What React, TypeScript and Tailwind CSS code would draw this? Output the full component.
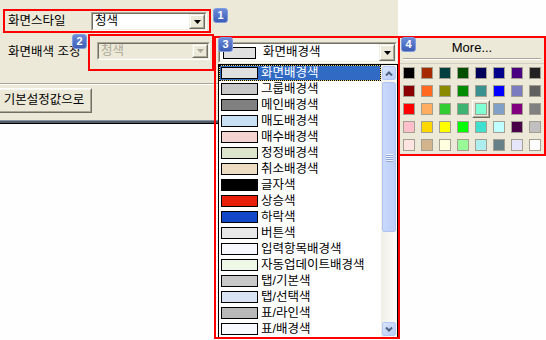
import type { ReactNode } from "react";

const listItems = [
  { name: "화면배경색", color: "#e0e0e0" },
  { name: "그룹배경색", color: "#c8c8c8" },
  { name: "메인배경색", color: "#808080" },
  { name: "매도배경색", color: "#c9dff3" },
  { name: "매수배경색", color: "#f3d3d0" },
  { name: "정정배경색", color: "#dce4cb" },
  { name: "취소배경색", color: "#eddcc2" },
  { name: "글자색", color: "#000000" },
  { name: "상승색", color: "#e8200a" },
  { name: "하락색", color: "#1247c8" },
  { name: "버튼색", color: "#e8e8e8" },
  { name: "입력항목배경색", color: "#f8f8ff" },
  { name: "자동업데이트배경색", color: "#eef8e6" },
  { name: "탭/기본색", color: "#c8c8c8" },
  { name: "탭/선택색", color: "#d8e4f4" },
  { name: "표/라인색", color: "#b8b8b8" },
  { name: "표/배경색", color: "#f8faff" },
];

const palette = [
  ["#000000", "#a52a00", "#004040", "#005000", "#00005a", "#00008b", "#4b0082", "#222222"],
  ["#8b0000", "#ff6a20", "#8b8b00", "#008b00", "#3a8f8f", "#0000ff", "#7b7bc0", "#606060"],
  ["#ff0000", "#ffad60", "#32cd32", "#3cb371", "#80ffd4", "#80a0c8", "#800080", "#808080"],
  ["#ffc0cb", "#ffd700", "#ffff00", "#00ff00", "#40e0d0", "#c0ffff", "#480048", "#c0c0c0"],
  ["#ffe4e1", "#d2b48c", "#ffffe0", "#98fb98", "#afeeee", "#668088", "#e6e6fa", "#ffffff"],
];

function DropButton({ disabled }: { disabled?: boolean }) {
  return (
    <div className="w-[16px] self-stretch border border-t-[#f1efe2] border-l-[#f1efe2] border-b-[#716f64] border-r-[#716f64]">
      <div className="h-full flex items-center justify-center bg-[#ece9d8] border border-t-white border-l-white border-b-[#aca899] border-r-[#aca899]">
        <svg width="7" height="4" viewBox="0 0 7 4">
          <polygon points="0,0 7,0 3.5,4" fill={disabled ? "#aca899" : "#000"} />
        </svg>
      </div>
    </div>
  );
}

function Combo({
  className,
  disabled,
  children,
}: {
  className: string;
  disabled?: boolean;
  children: ReactNode;
}) {
  return (
    <div
      className={`flex border border-t-[#aca899] border-l-[#aca899] border-b-white border-r-white ${className}`}
    >
      <div
        className={`flex flex-1 min-w-0 border border-t-[#716f64] border-l-[#716f64] border-b-[#f1efe2] border-r-[#f1efe2] ${
          disabled ? "bg-[#ece9d8]" : "bg-white"
        }`}
      >
        <div className="flex flex-1 min-w-0 items-center">{children}</div>
        <DropButton disabled={disabled} />
      </div>
    </div>
  );
}

function Swatch({ color, w }: { color: string; w: string }) {
  return <div className={`${w} h-[12px] shrink-0 border border-black`} style={{ background: color }} />;
}

function SettingsPanel() {
  return (
    <div className="w-[398px]">
      <div className="h-[120px] flex flex-col bg-[#ece9d8]">
        <div className="mt-[12px] h-[19px] flex items-center">
          <span className="w-[91px] pl-[8px] leading-none">화면스타일</span>
          <Combo className="w-[116px] h-[19px]">
            <span className="pl-[2px] leading-none">청색</span>
          </Combo>
        </div>

        <div className="mt-[11px] flex items-start">
          <span className="w-[97px] h-[21px] pl-[8px] flex items-center whitespace-nowrap leading-none">
            화면배색 조정
          </span>
          <Combo className="w-[113px] h-[18px]" disabled>
            <span className="pl-[2px] leading-none text-[#aca899]">청색</span>
          </Combo>
          <Combo className="ml-[8px] w-[179px] h-[21px]">
            <div className="pl-[3px] flex items-center gap-[7px]">
              <Swatch color="#e0e0e0" w="w-[33px]" />
              <span className="leading-none">화면배경색</span>
            </div>
          </Combo>
        </div>

        <div className="mt-[20px] h-[2px] border-t border-t-[#aca899] border-b border-b-white" />

        <button className="mt-[3px] -ml-[4px] w-[96px] h-[25px] border border-t-white border-l-white border-b-[#716f64] border-r-[#716f64]">
          <div className="h-full flex items-center justify-center bg-[#ece9d8] border border-t-[#f7f6f0] border-l-[#f7f6f0] border-b-[#aca899] border-r-[#aca899] leading-none whitespace-nowrap">
            기본설정값으로
          </div>
        </button>
      </div>
      <div className="h-px bg-[#8a949e]" />
      <div className="h-[2px] bg-[#4f5d6b]" />
      <div className="h-px bg-black" />
    </div>
  );
}

function ScrollButton({ up }: { up?: boolean }) {
  return (
    <div className="h-[16px] p-px">
      <div className="h-full rounded-[2px] border border-[#b4c8f6] bg-gradient-to-br from-[#d9e4fd] to-[#b9cbf6] flex items-center justify-center">
        <svg width="8" height="5" viewBox="0 0 8 5">
          <polyline
            points={up ? "1,4.5 4,1.5 7,4.5" : "1,0.5 4,3.5 7,0.5"}
            fill="none"
            stroke="#4d6185"
            strokeWidth="2"
          />
        </svg>
      </div>
    </div>
  );
}

function ColorList() {
  return (
    <div className="absolute left-[218px] top-[64px] w-[180px] h-[274px] border border-black bg-white flex">
      <div className="flex-1 flex flex-col">
        {listItems.map((item, i) =>
          i === 0 ? (
            <div key={item.name} className="h-[16px] border border-dotted border-black bg-[#e8d878]">
              <div className="h-full bg-[#316ac5] text-white flex items-center gap-[3px] pl-px">
                <Swatch color={item.color} w="w-[37px]" />
                <span className="leading-none">{item.name}</span>
              </div>
            </div>
          ) : (
            <div key={item.name} className="h-[16px] border border-transparent flex items-center gap-[3px] pl-px">
              <Swatch color={item.color} w="w-[37px]" />
              <span className="leading-none whitespace-nowrap">{item.name}</span>
            </div>
          )
        )}
      </div>
      <div className="w-[16px] flex flex-col bg-gradient-to-r from-[#f0eee6] to-[#fdfdfa]">
        <ScrollButton up />
        <div className="h-[150px] mt-px px-px">
          <div className="h-full rounded-[2px] border border-[#b0c4f2] bg-gradient-to-r from-[#c9d8fc] to-[#bccef8] flex flex-col items-center justify-center gap-px">
            {[0, 1, 2, 3].map((k) => (
              <div key={k} className="w-[7px] h-px bg-[#eef3fe] shadow-[0_1px_0_#8fa6dc]" />
            ))}
          </div>
        </div>
        <div className="flex-1" />
        <ScrollButton />
      </div>
    </div>
  );
}

function Palette() {
  return (
    <div className="absolute left-[400px] top-[37px] w-[144px] h-[118px] bg-[#ece9d8] flex flex-col">
      <div className="h-[20px] flex items-center justify-center text-[13px] leading-none">More...</div>
      <div className="mt-px mx-[3px] h-[2px] border-t border-t-[#aca899] border-b border-b-white" />
      <div className="mt-[3px] h-px bg-[#d2cfc2]" />
      <div className="grid grid-cols-[repeat(8,18px)] auto-rows-[18px]">
        {palette.flatMap((row, r) =>
          row.map((c, col) => (
            <div key={`${r}-${col}`} className="relative flex items-center justify-center">
              {r === 2 && col === 4 && (
                <>
                  <div className="absolute inset-0 border border-t-white border-l-white border-b-[#716f64] border-r-[#716f64]" />
                  <div className="absolute inset-px border border-transparent border-b-[#aca899] border-r-[#aca899]" />
                </>
              )}
              <div className="w-[12px] h-[12px] border border-[#a39f92]" style={{ background: c }} />
            </div>
          ))
        )}
      </div>
    </div>
  );
}

function Badge({ n, className }: { n: number; className: string }) {
  return (
    <div
      className={`absolute w-[15px] h-[15px] rounded-[3px] border border-[#7f9be0] bg-gradient-to-b from-[#6a8ad8] to-[#3d5db5] text-white text-[11px] font-bold leading-none flex items-center justify-center ${className}`}
    >
      {n}
    </div>
  );
}

export default function App() {
  return (
    <div className="relative w-[546px] h-[340px] overflow-hidden bg-[#fefefe] text-[12.5px] text-black font-['Liberation_Sans','Noto_Sans_CJK_KR',sans-serif]">
      <SettingsPanel />
      <ColorList />
      <Palette />

      <div className="absolute left-[3px] top-[9px] w-[208px] h-[24px] border-2 border-[#ff0000]" />
      <div className="absolute left-[88px] top-[34px] w-[126px] h-[37px] border-2 border-[#ff0000]" />
      <div className="absolute left-[214px] top-[36px] w-[186px] h-[303px] border-2 border-[#ff0000]" />
      <div className="absolute left-[398px] top-[36px] w-[148px] h-[120px] border-2 border-[#ff0000]" />

      <Badge n={1} className="left-[213px] top-[8px]" />
      <Badge n={2} className="left-[72px] top-[34px]" />
      <Badge n={3} className="left-[218px] top-[37px]" />
      <Badge n={4} className="left-[401px] top-[37px]" />
    </div>
  );
}
